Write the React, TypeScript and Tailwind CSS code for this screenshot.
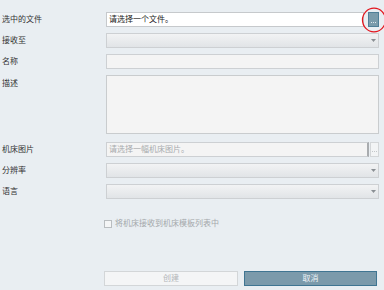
const font = { fontFamily: '"Liberation Sans", "Noto Sans CJK SC", sans-serif' }

function Arrow() {
  return (
    <svg width="5" height="3" viewBox="0 0 5 3" className="shrink-0">
      <path d="M0 0h5L2.5 3z" fill="#8a8f94" />
    </svg>
  )
}

function Combo() {
  return (
    <div className="flex h-[15px] items-center justify-end border border-[#cdd0d3] bg-gradient-to-b from-[#f2f3f4] to-[#e1e4e7] pr-[2px]">
      <Arrow />
    </div>
  )
}

function Dots({ color }: { color: string }) {
  return (
    <div className="flex gap-[1px]">
      <span className="h-[1px] w-[1px]" style={{ background: color }} />
      <span className="h-[1px] w-[1px]" style={{ background: color }} />
      <span className="h-[1px] w-[1px]" style={{ background: color }} />
    </div>
  )
}

export default function App() {
  return (
    <div className="h-[290px] w-[384px] overflow-hidden bg-[#e9eef2] text-[8px] leading-none text-[#333]" style={font}>
      <div className="grid grid-cols-[104px_273px] gap-y-[6px] pl-[2px] pt-[12px]">
        <div className="flex items-center">选中的文件</div>
        <div className="flex h-[15px] items-stretch gap-[4px]">
          <div className="flex flex-1 items-center border border-[#c6c9cc] bg-white px-[2px] text-[#222]">请选择一个文件。</div>
          <div className="relative flex w-[11px] items-end justify-center border border-[#4f7f98] bg-[#7a9bab] pb-[3px]">
            <Dots color="#dfe8ee" />
            <svg className="absolute left-[-8px] top-[-6px]" width="26" height="26" viewBox="0 0 26 26">
              <ellipse cx="13" cy="13" rx="11.5" ry="11.8" fill="none" stroke="#e3161e" strokeWidth="1.3" />
            </svg>
          </div>
        </div>

        <div className="flex items-center">接收至</div>
        <Combo />

        <div className="flex items-center">名称</div>
        <div className="h-[15px] border border-[#cdd0d3] bg-[#f4f4f4]" />

        <div className="pt-[5px]">描述</div>
        <div className="h-[59px] border border-[#c9ccce] bg-[#f4f4f4]" />

        <div className="mt-[2px] flex items-center">机床图片</div>
        <div className="mt-[2px] flex h-[15px] items-stretch gap-[1px]">
          <div className="flex flex-1 items-center border border-[#cdd0d3] border-r-[#a9acaf] border-r-2 bg-[#f4f4f4] px-[2px] text-[#a8abae]">请选择一幅机床图片。</div>
          <div className="flex w-[9px] items-end justify-center border border-[#d3d6d8] bg-[#f2f4f5] pb-[4px]">
            <Dots color="#c3c7ca" />
          </div>
        </div>

        <div className="flex items-center">分辨率</div>
        <Combo />

        <div className="flex items-center">语言</div>
        <div className="h-[16px]">
          <Combo />
        </div>
      </div>

      <div className="ml-[104px] mt-[20px] flex items-center gap-[3px] text-[#a4a8ab]">
        <div className="h-[8px] w-[8px] border border-[#b9bdc0] bg-[#f4f5f6]" />
        <span>将机床接收到机床模板列表中</span>
      </div>

      <div className="ml-[104px] mt-[43px] flex w-[273px] gap-[6px]">
        <div className="flex h-[15px] w-[134px] items-center justify-center border border-[#d3d6d8] bg-[#f4f5f6] text-[#b3b6b9]">创建</div>
        <div className="flex h-[15px] flex-1 items-center justify-center border border-[#3f7592] bg-[#7b9aab] text-[#eef3f6]">取消</div>
      </div>
    </div>
  )
}
